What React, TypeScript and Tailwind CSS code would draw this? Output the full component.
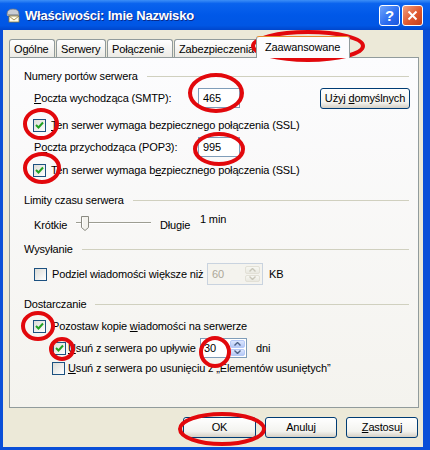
import React from "react";

function Check({ checked }: { checked?: boolean }) {
    return (
        <div className="w-[13px] h-[13px] shrink-0 border border-[#1c5180] bg-[linear-gradient(135deg,#dcdcd7,#ffffff)] flex items-center justify-center">
            {checked && (
                <svg width="9" height="9" viewBox="0 0 9 9">
                    <path d="M1 4 L3.5 6.5 L8 1.5" stroke="#21a121" strokeWidth="2" fill="none" />
                </svg>
            )}
        </div>
    );
}

function GroupHeader({ title }: { title: string }) {
    return (
        <div className="h-[14px] flex items-center pr-[9px]">
            <span>{title}</span>
            <div className="flex-1 ml-[9px] h-px bg-[#d0d0bf]" />
        </div>
    );
}

function Spinner({ disabled }: { disabled?: boolean }) {
    const arrow = disabled ? "#c9c7ba" : "#4d6185";
    const bg = disabled
        ? "bg-[linear-gradient(180deg,#f7f7f2,#e9e8e0)] border-[#e2e0d6]"
        : "bg-[linear-gradient(180deg,#dce6fd,#b4c8f6)] border-[#b6c9f7]";
    return (
        <div className="w-[15px] h-full flex flex-col gap-px">
            {[0, 1].map((i) => (
                <div key={i} className={`flex-1 rounded-[2px] border ${bg} flex items-center justify-center`}>
                    <svg width="7" height="4" viewBox="0 0 7 4">
                        <path
                            d={i === 0 ? "M0.5 3.5 L3.5 0.5 L6.5 3.5" : "M0.5 0.5 L3.5 3.5 L6.5 0.5"}
                            stroke={arrow}
                            strokeWidth="1.4"
                            fill="none"
                        />
                    </svg>
                </div>
            ))}
        </div>
    );
}

function XpButton({ children, w }: { children: React.ReactNode; w: string }) {
    return (
        <div className={`${w} h-[21px] rounded-[3px] border border-[#003c74] bg-[linear-gradient(180deg,#ffffff,#f3f3ef_70%,#d6d0c5)] flex items-center justify-center`}>
            {children}
        </div>
    );
}

export default function App() {
    const tabs = [
        { label: "Ogólne", w: "w-[46px]" },
        { label: "Serwery", w: "w-[50px]" },
        { label: "Połączenie", w: "w-[66px]" },
        { label: "Zabezpieczenia", w: "w-[84px]" },
    ];

    return (
        <div className="relative w-[430px] h-[450px] overflow-hidden bg-[#0a4fd8] font-['Liberation_Sans',sans-serif] text-[11px] tracking-[-0.15px] whitespace-nowrap text-black leading-none">
            {/* title bar */}
            <div className="h-[30px] flex items-center bg-[linear-gradient(180deg,#3d8ff7_0%,#0a63ee_12%,#0058e8_50%,#0056e4_85%,#0046cc_100%)] pl-[5px] pr-[7px]">
                <svg width="16" height="16" viewBox="0 0 16 16" className="shrink-0">
                    <path d="M2 7 Q2 2 8 2 Q14 2 14 7 L14 8 L2 8 Z" fill="#c9cdd4" stroke="#6b7380" strokeWidth="0.8" />
                    <rect x="2" y="7" width="12" height="2" fill="#9aa1ab" />
                    <rect x="4" y="9" width="10" height="6" fill="#fffbe8" stroke="#8a7a3a" strokeWidth="0.8" />
                    <path d="M4 9 L9 13 L14 9" stroke="#8a7a3a" strokeWidth="0.8" fill="none" />
                </svg>
                <span className="ml-[4px] text-white font-bold text-[13px] tracking-[-0.2px] [text-shadow:1px_1px_0_#0a2a8a]">
                    Właściwości: Imie Nazwisko
                </span>
                <div className="ml-auto flex gap-[2px]">
                    <div className="w-[21px] h-[21px] rounded-[3px] border border-white bg-[linear-gradient(135deg,#6fa4fb,#2a6cf0_60%,#1b55dc)] flex items-center justify-center text-white font-bold text-[15px]">
                        ?
                    </div>
                    <div className="w-[21px] h-[21px] rounded-[3px] border border-white bg-[linear-gradient(135deg,#f0a080,#e0582e_55%,#c4401c)] flex items-center justify-center">
                        <svg width="11" height="11" viewBox="0 0 11 11">
                            <path d="M1.5 1.5 L9.5 9.5 M9.5 1.5 L1.5 9.5" stroke="white" strokeWidth="2" />
                        </svg>
                    </div>
                </div>
            </div>

            {/* body */}
            <div className="ml-[3px] mr-[7px] h-[417px] bg-[#ece9d8] pl-[6px] pr-[4px] pt-[5px]">
                {/* tabs */}
                <div className="h-[22px] flex items-end">
                    {tabs.map((t) => (
                        <div
                            key={t.label}
                            className={`${t.w} h-[18px] mr-px pl-[4px] pt-[4px] rounded-t-[3px] border border-b-0 border-[#919b9c] bg-[linear-gradient(180deg,#ffffff,#ecebe6)]`}
                        >
                            {t.label}
                        </div>
                    ))}
                    <div className="w-[94px] h-[22px] -ml-[3px] -mb-px z-10 pl-[8px] pt-[5px] rounded-t-[3px] border border-b-0 border-[#919b9c] border-t-[#e68b2c] bg-[#fcfcfe]">
                        Zaawansowane
                    </div>
                </div>

                {/* panel */}
                <div className="h-[351px] border border-[#919b9c] bg-[linear-gradient(180deg,#fcfcfe,#f4f3ee)] pl-[14px]">
                    <div className="mt-[11px]">
                        <GroupHeader title="Numery portów serwera" />
                    </div>

                    <div className="mt-[5px] h-[20px] flex items-center pl-[10px] pr-[8px]">
                        <span className="w-[164px]">
                            <u>P</u>oczta wychodząca (SMTP):
                        </span>
                        <div className="w-[42px] h-[20px] border border-[#7f9db9] bg-white flex items-center pl-[4px]">465</div>
                        <div className="ml-auto">
                            <XpButton w="w-[90px]">
                                <span>
                                    Użyj <u>d</u>omyślnych
                                </span>
                            </XpButton>
                        </div>
                    </div>

                    <div className="mt-[10px] h-[14px] flex items-center pl-[9px] gap-[5px]">
                        <Check checked />
                        <span>
                            <u>T</u>en serwer wymaga bezpiecznego połączenia (SSL)
                        </span>
                    </div>

                    <div className="mt-[5px] h-[20px] flex items-center pl-[10px]">
                        <span className="w-[164px]">
                            P<u>o</u>czta przychodząca (POP3):
                        </span>
                        <div className="w-[42px] h-[20px] border border-[#7f9db9] bg-white flex items-center pl-[4px]">995</div>
                    </div>

                    <div className="mt-[6px] h-[14px] flex items-center pl-[9px] gap-[5px]">
                        <Check checked />
                        <span>
                            Ten serwer wymaga b<u>e</u>zpiecznego połączenia (SSL)
                        </span>
                    </div>

                    <div className="mt-[16px]">
                        <GroupHeader title="Limity czasu serwera" />
                    </div>

                    <div className="mt-[6px] h-[24px] flex pl-[10px]">
                        <span className="self-end mb-[6px] w-[41px]">Krótkie</span>
                        <svg width="80" height="24" viewBox="0 0 80 24" className="shrink-0">
                            <rect x="1" y="9" width="75" height="2" fill="#d0d0bf" />
                            <line x1="1" y1="9.5" x2="76" y2="9.5" stroke="#9d9d92" />
                            <line x1="1" y1="10.5" x2="76" y2="10.5" stroke="#ffffff" />
                            <path d="M6.5 3.5 L13.5 3.5 L13.5 14.5 L10 17.5 L6.5 14.5 Z" fill="#f4f3ee" stroke="#8b8b82" />
                            <line x1="7.5" y1="5" x2="7.5" y2="14" stroke="#ffffff" />
                        </svg>
                        <span className="self-end mb-[6px] ml-[5px] w-[40px]">Długie</span>
                        <span className="mt-[1px]">1 min</span>
                    </div>

                    <div className="mt-[5px]">
                        <GroupHeader title="Wysyłanie" />
                    </div>

                    <div className="mt-[7px] h-[22px] flex items-center pl-[10px]">
                        <Check />
                        <span className="ml-[5px] w-[155px]">Podziel wiadomości większe niż</span>
                        <div className="w-[56px] h-[22px] border border-[#c9d3df] bg-[#f4f3ee] flex items-center pl-[4px] pr-[2px] py-[2px] text-[#aca899]">
                            <span className="flex-1">60</span>
                            <Spinner disabled />
                        </div>
                        <span className="ml-[6px]">KB</span>
                    </div>

                    <div className="mt-[12px]">
                        <GroupHeader title="Dostarczanie" />
                    </div>

                    <div className="mt-[8px] h-[14px] flex items-center pl-[9px] gap-[6px]">
                        <Check checked />
                        <span>
                            Pozostaw kopie <u>w</u>iadomości na serwerze
                        </span>
                    </div>

                    <div className="mt-[5px] h-[20px] flex items-center pl-[29px]">
                        <Check checked />
                        <span className="ml-[2px] w-[132px]">
                            <u>U</u>suń z serwera po upływie
                        </span>
                        <div className="w-[47px] h-[20px] border border-[#7f9db9] bg-white flex items-center pl-[3px] pr-[1px] py-px">
                            <span className="flex-1">30</span>
                            <Spinner />
                        </div>
                        <span className="ml-[9px]">dni</span>
                    </div>

                    <div className="mt-[3px] h-[14px] flex items-center pl-[28px] gap-[3px]">
                        <Check />
                        <span>
                            <u>U</u>suń z serwera po usunięciu z „Elementów usuniętych”
                        </span>
                    </div>
                </div>

                {/* buttons */}
                <div className="mt-[9px] flex justify-end gap-[9px] pr-[1px]">
                    <XpButton w="w-[73px]">OK</XpButton>
                    <XpButton w="w-[72px]">Anuluj</XpButton>
                    <XpButton w="w-[72px]">
                        <span>
                            <u>Z</u>astosuj
                        </span>
                    </XpButton>
                </div>
            </div>

            {/* red annotation ellipses */}
            <svg className="absolute inset-0 pointer-events-none" width="430" height="450" viewBox="0 0 430 450">
                <g fill="none" stroke="#e2080c" strokeWidth="4">
                    <ellipse cx="308" cy="46" rx="55" ry="14" />
                    <ellipse cx="216" cy="93" rx="26" ry="18" />
                    <ellipse cx="219" cy="149" rx="24" ry="15" />
                    <ellipse cx="41" cy="124" rx="16" ry="14" />
                    <ellipse cx="42" cy="168" rx="17" ry="14" />
                    <ellipse cx="38" cy="326" rx="15" ry="13" />
                    <ellipse cx="62" cy="349" rx="11" ry="10" />
                    <ellipse cx="215" cy="352" rx="14" ry="14" />
                    <ellipse cx="222" cy="429" rx="42" ry="15" />
                </g>
            </svg>
        </div>
    );
}
